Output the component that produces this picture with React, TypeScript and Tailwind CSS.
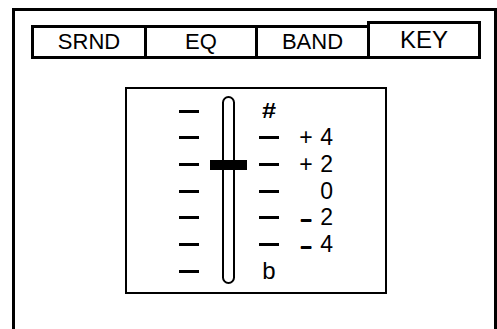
import React from "react";

const rows = [0, 1, 2, 3, 4, 5, 6];

function Tick() {
  return <div className="w-[20px] h-[3px] bg-black" />;
}

export default function App() {
  const labels: { sign: string; digit: string; minus?: boolean }[] = [
    { sign: "", digit: "" },
    { sign: "+", digit: "4" },
    { sign: "+", digit: "2" },
    { sign: "", digit: "0" },
    { sign: "–", digit: "2", minus: true },
    { sign: "–", digit: "4", minus: true },
    { sign: "", digit: "" },
  ];
  return (
    <div className="w-[497px] h-[329px] overflow-hidden bg-white text-black font-['Liberation_Sans',Arial,sans-serif]">
      <div className="ml-[12px] mt-[8px] w-[485px] h-[340px] border-[3px] border-b-0 border-black pt-[10px] pl-[16px]">
        {/* Tabs */}
        <div className="flex items-end h-[38px]">
          <div className="w-[113px] h-[34px] border-[3px] border-r-0 border-black flex items-center justify-center text-[22px] leading-none">
            SRND
          </div>
          <div className="w-[111px] h-[34px] border-[3px] border-r-0 border-black flex items-center justify-center text-[22px] leading-none">
            EQ
          </div>
          <div className="w-[112px] h-[34px] border-[3px] border-r-0 border-black flex items-center justify-center text-[22px] leading-none">
            BAND
          </div>
          <div className="w-[114px] h-[38px] border-[3px] border-black flex items-center justify-center text-[24px] leading-none">
            KEY
          </div>
        </div>

        {/* Panel */}
        <div className="ml-[94px] mt-[28px] w-[262px] h-[207px] border-2 border-black flex items-start pt-[9px] pl-[52px]">
          {/* left ticks */}
          <div className="flex flex-col">
            {rows.map((r) => (
              <div key={r} className="h-[26.67px] flex items-center">
                <Tick />
              </div>
            ))}
          </div>

          {/* track */}
          <div className="ml-[23px] -mt-[2px] relative w-[13px] h-[188px] border-2 border-black rounded-full">
            <div className="absolute left-[-14px] top-[62px] w-[37px] h-[10px] bg-black" />
          </div>

          {/* right ticks & symbols */}
          <div className="ml-[24px] w-[20px] flex flex-col">
            {rows.map((r) => (
              <div key={r} className="h-[26.67px] flex items-center justify-center leading-none">
                {r === 0 ? (
                  <span className="text-[22px] font-bold inline-block scale-x-[1.15]">#</span>
                ) : r === 6 ? (
                  <span className="text-[24px]">b</span>
                ) : (
                  <Tick />
                )}
              </div>
            ))}
          </div>

          {/* labels */}
          <div className="ml-[20px] flex flex-col">
            {labels.map((l, i) => (
              <div key={i} className="h-[26.67px] flex items-center leading-none text-[23px]">
                <span className="w-[14px] flex justify-center">
                  {l.minus ? (
                    <span className="font-bold text-[21px] leading-none [text-shadow:0_1px_0_#000]">{l.sign}</span>
                  ) : (
                    l.sign
                  )}
                </span>
                <span className="ml-[6px] w-[14px] text-right">{l.digit}</span>
              </div>
            ))}
          </div>
        </div>
      </div>
    </div>
  );
}
